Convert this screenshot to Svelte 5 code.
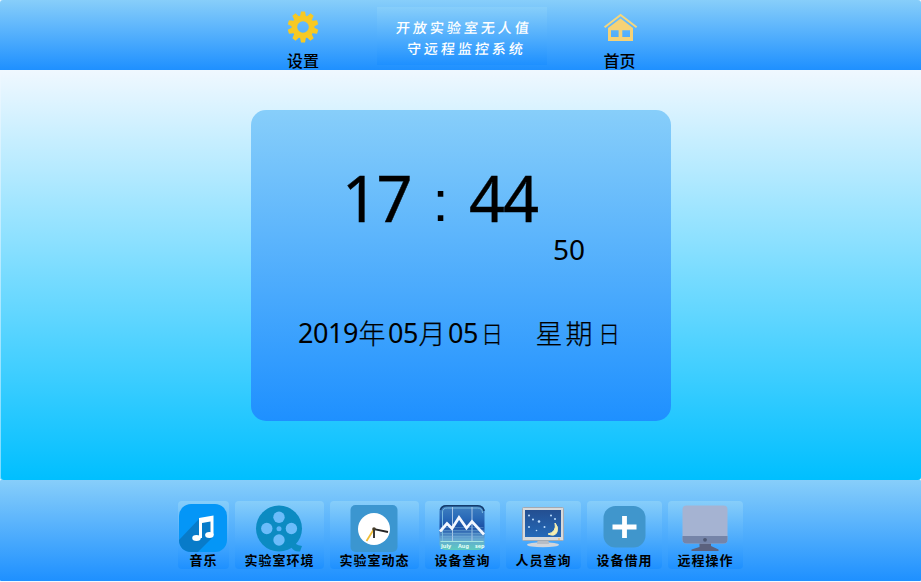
<script>
  const tools = [
    { label: '音乐', icon: 'music', width: 51 },
    { label: '实验室环境', icon: 'film', width: 89 },
    { label: '实验室动态', icon: 'clock', width: 89 },
    { label: '设备查询', icon: 'chart', width: 75 },
    { label: '人员查询', icon: 'night', width: 75 },
    { label: '设备借用', icon: 'plus', width: 75 },
    { label: '远程操作', icon: 'remote', width: 75 }
  ];
  const holes = [[25, 16.3], [12.8, 27.5], [37.4, 27.5], [25, 39]];
</script>

<div class="screen">
  <header>
    <button class="nav">
      <svg width="32" height="32" viewBox="0 0 32 32">
        <g fill="#f7c923">
          {#each Array(10) as _, i}
            <path d="M12.7 7 L14 .6 H18 L19.3 7Z" transform="rotate({i * 36} 16 16)" />
          {/each}
        </g>
        <circle cx="16" cy="16" r="8.6" fill="none" stroke="#f7c923" stroke-width="5.6" />
      </svg>
      <span>设置</span>
    </button>
    <h1><span>开放实验室无人值</span><span>守远程监控系统</span></h1>
    <button class="nav home">
      <svg width="36" height="32" viewBox="0 0 36 32">
        <path d="M2.6 16.2 L18.6 4 L34.6 16.2" fill="none" stroke="#f6d67b" stroke-width="2" />
        <path fill="#f6d276" fill-rule="evenodd" d="M6 17 L18.6 7.4 L31 17 V30 H6Z M9 19.3 V26 H16.6 V19.3Z M20.3 19.3 V26 H28 V19.3Z" />
      </svg>
      <span>首页</span>
    </button>
  </header>

  <main>
    <section class="card">
      <div class="time"><span class="hour">17</span><span class="colon">:</span><span>44</span></div>
      <div class="seconds">50</div>
      <div class="date">
        <b>2019</b><i>年</i><b>05</b><i>月</i><b>05</b><i class="day">日</i><i class="gap"></i><i>星</i><i>期</i><i class="day">日</i>
      </div>
    </section>
  </main>

  <footer>
    {#each tools as tool}
      <button class="tool" style="width: {tool.width}px">
        <svg width="50" height="51" viewBox="0 0 50 51">
          {#if tool.icon === 'music'}
            <rect x="1" y="3" width="48" height="48" rx="12" fill="#0496f7" />
            <path d="M1 39 L21 18 L35 16 V36 L20 51 H13 C6 51 1 46 1 39Z" fill="#087bc9" />
            <path d="M21 17 L35.5 14.5 V34 H32.5 V20.5 L24 22 V37 H21Z" fill="white" />
            <ellipse cx="18.5" cy="37" rx="4.3" ry="3" fill="white" />
            <ellipse cx="31.4" cy="34" rx="4.3" ry="3" fill="white" />
          {:else if tool.icon === 'film'}
            <circle cx="25" cy="27.5" r="23" fill="#0c8bc2" />
            <path d="M28 44 L40 39 Q40 44 48 45 L46 50.5 Q40 51 37 46Z" fill="#0c8bc2" />
            {#each holes as [x, y]}
              <circle cx={x} cy={y} r="5.7" fill="#6bbcfa" />
            {/each}
            <circle cx="25" cy="27.7" r="2.5" fill="#5cb4f8" />
          {:else if tool.icon === 'clock'}
            <rect x="1.5" y="4" width="47" height="47" rx="5" fill="#3b96d0" />
            <circle cx="25" cy="28" r="16" fill="white" />
            <path d="M25 28 L17.5 40" stroke="#f0bd35" stroke-width="1.8" />
            <path d="M25 37 V28 L39 31" fill="none" stroke="#252525" stroke-width="1.8" />
            <circle cx="25" cy="28" r="1.8" fill="#453d2a" />
          {:else if tool.icon === 'chart'}
            <defs>
              <linearGradient id="chartSky" x1="0" y1="0" x2="0" y2="1">
                <stop offset="0" stop-color="#4282c1" />
                <stop offset=".3" stop-color="#2869b8" />
                <stop offset=".5" stop-color="#1b4fa5" />
                <stop offset=".75" stop-color="#65a5d2" />
                <stop offset="1" stop-color="#5ccbc0" />
              </linearGradient>
            </defs>
            <rect x="2.5" y="4" width="45" height="45" rx="6" fill="url(#chartSky)" />
            <path d="M3.5 9 Q4.5 4.7 9.5 4.7 H40.5 Q46.5 5 47 10" fill="none" stroke="#143c6b" stroke-width="1.5" />
            <path d="M5.5 40 V11 Q5.5 7 10.5 7 H40.5 Q45.5 7 45.5 12" fill="none" stroke="#76b8df" />
            <path d="M15.5 6 V41 M35 6 V41" stroke="#a8c6e7" />
            <path d="M3.5 26.5H46.5 M3.5 29.5H46.5 M3.5 32.5H46.5 M3.5 35.5H46.5" stroke="#7fb9dc" stroke-width=".7" opacity=".6" />
            <path d="M3 30.5 L10 22.5 L15 27.5 L22 16.5 L29.5 27 L35 20.5 L47 33.5" fill="none" stroke="#f4f7ff" stroke-width="2.7" />
            <path d="M3.5 40.5H46.5" stroke="#a4e7e2" />
            <text class="month" x="4" y="46.5">July</text>
            <text class="month" x="21" y="46.5">Aug</text>
            <text class="month" x="38" y="46.5">sep</text>
          {:else if tool.icon === 'night'}
            <defs>
              <linearGradient id="nightSky" x1="0" y1="0" x2="0" y2="1">
                <stop offset="0" stop-color="#244f91" /><stop offset="1" stop-color="#2369b8" />
              </linearGradient>
            </defs>
            <ellipse cx="25" cy="43.8" rx="16" ry="2.5" fill="#d0d4da" />
            <path d="M20 37 H30 L31 43 H19Z" fill="#b8bdc5" />
            <rect x="4.5" y="6.5" width="41" height="33" rx="1" fill="#d7dadc" stroke="#a3aab3" />
            <rect x="7" y="9" width="36" height="27" fill="url(#nightSky)" />
            <path d="M37 22 Q39 31 30 33 Q37 36 39 31 Q41 26 37 22Z" fill="#f6efb0" stroke="#f6efb0" />
            <g fill="#bfe0ff">
              <circle cx="11" cy="14.5" r="1" /><circle cx="15" cy="18.5" r="1" /><circle cx="21" cy="20.5" r="1.3" />
              <circle cx="33" cy="14.5" r="1" /><circle cx="37" cy="18" r="1" /><circle cx="11" cy="26" r="1" />
              <circle cx="18.5" cy="29.5" r=".8" /><circle cx="26.5" cy="26" r="1" />
            </g>
            <circle cx="41" cy="38" r="1" fill="#f0bb68" />
          {:else if tool.icon === 'plus'}
            <rect x="4.5" y="5" width="42" height="41.5" rx="12" fill="#4096cc" />
            <path d="M25.5 15 V37 M13.5 26 H37.5" stroke="white" stroke-width="4.8" />
          {:else}
            <path d="M19.5 41 H31 V45 L38.5 48.5 V50 H11.5 V48.5 L19.5 46Z" fill="#5b617d" />
            <rect x="2.5" y="4.5" width="45" height="38" rx="4" fill="#a5b3d2" />
            <path d="M2.5 35 H47.5 V38.5 Q47.5 42.5 43.5 42.5 H6.5 Q2.5 42.5 2.5 38.5Z" fill="#7584a8" />
            <circle cx="25" cy="38.8" r="1.9" fill="#4d5773" />
          {/if}
        </svg>
        <span>{tool.label}</span>
      </button>
    {/each}
  </footer>
</div>

<style>
  .screen {
    width: 921px;
    height: 582px;
    display: flex;
    flex-direction: column;
    overflow: hidden;
    background: #f0f8ff;
    color: #000;
    font-family: "Noto Sans CJK SC", sans-serif;
  }
  button {
    border: 0;
    padding: 0;
    background: none;
    color: inherit;
    font-family: inherit;
  }
  header {
    box-sizing: border-box;
    height: 70px;
    flex: none;
    display: flex;
    padding-left: 278px;
    border-radius: 3px 3px 0 0;
    background: linear-gradient(#87cefa, #1e90ff);
  }
  .nav {
    width: 50px;
    height: 70px;
    padding-top: 11px;
    display: flex;
    flex-direction: column;
    align-items: center;
  }
  .nav svg { flex: none; }
  .nav span {
    font-size: 16px;
    line-height: 20px;
    font-weight: 500;
    margin-top: 7px;
  }
  h1 {
    box-sizing: border-box;
    width: 170px;
    height: 58px;
    margin: 7px 49px 0;
    padding: 10px 0 0 19px;
    background: linear-gradient(#87cefa, #1e90ff);
    color: #fff;
    font-size: 14px;
    font-weight: 500;
    letter-spacing: 3px;
  }
  h1 span {
    display: block;
    height: 20.5px;
    line-height: 20px;
    transform: skewX(-5deg);
    white-space: nowrap;
  }
  h1 span + span { padding-left: 11px; }
  .home { margin-left: -1px; }
  .home span { margin-left: -1px; }
  main {
    box-sizing: border-box;
    height: 410px;
    flex: none;
    padding: 40px 0 0 251px;
    background: linear-gradient(#f0f8ff, #00bfff);
    border-radius: 0 0 3px 3px;
    box-shadow: inset 1px 0 rgba(240, 248, 255, .5);
  }
  .card {
    box-sizing: border-box;
    width: 420px;
    height: 311px;
    border-radius: 15px;
    background: linear-gradient(#87cefa, #1e90ff);
    padding-top: 50px;
    font-family: "Noto Sans", sans-serif;
  }
  .time {
    display: flex;
    height: 76px;
    padding-left: 91px;
    font-size: 63px;
    line-height: 75px;
    letter-spacing: -2px;
    -webkit-text-stroke: .4px #000;
  }
  .hour {
    width: 68px;
    letter-spacing: -1.5px;
  }
  .colon {
    width: 59px;
    font: 58px/82px "Liberation Sans", sans-serif;
    text-align: center;
    -webkit-text-stroke: 0;
  }
  .seconds {
    height: 30px;
    padding-left: 302px;
    font-size: 28px;
    line-height: 26px;
  }
  .date {
    display: flex;
    height: 40px;
    margin-top: 48px;
    padding-left: 47px;
    line-height: 38px;
  }
  .date b {
    font-size: 27px;
    font-weight: 400;
    letter-spacing: -.44px;
  }
  .date i {
    width: 30px;
    margin-left: -1px;
    margin-right: 1px;
    font: 300 27px/38px "Noto Sans CJK SC", sans-serif;
    text-align: center;
    -webkit-text-stroke: .25px #000;
  }
  .date .day { transform: scale(.82, .9); }
  .date .gap { width: 27px; }
  footer {
    box-sizing: border-box;
    height: 101px;
    flex: none;
    display: flex;
    gap: 6px;
    padding: 21px 0 0 178px;
    background: linear-gradient(#87cefa, #1e90ff);
    border-radius: 1px;
  }
  .tool {
    height: 68px;
    display: flex;
    flex-direction: column;
    align-items: center;
    border-radius: 4px;
    background: linear-gradient(#87cefa, #1e90ff);
  }
  .tool svg {
    flex: none;
    margin-right: 1px;
  }
  .tool span {
    font-size: 13px;
    line-height: 16px;
    font-weight: 700;
    letter-spacing: 1px;
    white-space: nowrap;
  }
  .month {
    fill: #e6fff8;
    font: bold 5.5px "Noto Sans", sans-serif;
  }
</style>
